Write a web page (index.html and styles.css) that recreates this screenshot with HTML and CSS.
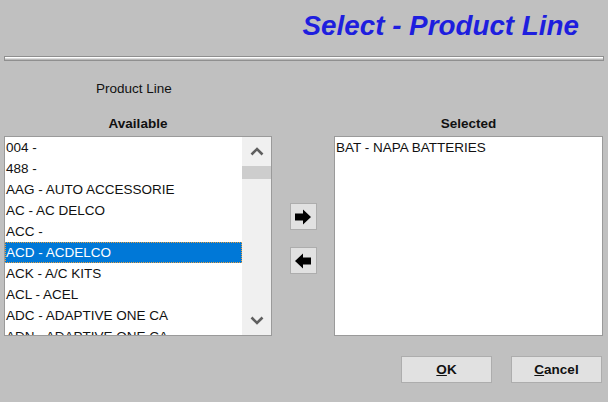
FILE: index.html
```html
<!DOCTYPE html>
<html>
<head>
<meta charset="utf-8">
<link rel="stylesheet" href="styles.css">
</head>
<body>
<div class="dialog">
  <div class="header">
    <h1 class="title">Select - Product Line</h1>
  </div>
  <div class="separator"></div>
  <div class="field-label">Product Line</div>
  <div class="picker">
    <div class="col-label">Available</div>
    <div></div>
    <div class="col-label">Selected</div>

    <div class="listbox">
      <ul class="items">
        <li>004 -</li>
        <li>488 -</li>
        <li>AAG - AUTO ACCESSORIE</li>
        <li>AC - AC DELCO</li>
        <li>ACC -</li>
        <li class="selected">ACD - ACDELCO</li>
        <li>ACK - A/C KITS</li>
        <li>ACL - ACEL</li>
        <li>ADC - ADAPTIVE ONE CA</li>
        <li>ADN - ADAPTIVE ONE CA</li>
      </ul>
      <div class="scrollbar">
        <div class="sb-btn">
          <svg width="14" height="9" viewBox="0 0 14 9"><path d="M1.5 7.5 L7 2 L12.5 7.5" fill="none" stroke="#5f5f5f" stroke-width="2.6"/></svg>
        </div>
        <div class="sb-thumb"></div>
        <div class="sb-track"></div>
        <div class="sb-btn">
          <svg width="14" height="9" viewBox="0 0 14 9"><path d="M1.5 1.5 L7 7 L12.5 1.5" fill="none" stroke="#5f5f5f" stroke-width="2.6"/></svg>
        </div>
      </div>
    </div>

    <div class="movers">
      <button class="mover" type="button" aria-label="Add">
        <svg width="18" height="16" viewBox="0 0 18 16"><path d="M1 4.5 H9 V0.5 L17 8 L9 15.5 V11.5 H1 Z" fill="#000"/></svg>
      </button>
      <button class="mover" type="button" aria-label="Remove">
        <svg width="18" height="16" viewBox="0 0 18 16"><path d="M17 4.5 H9 V0.5 L1 8 L9 15.5 V11.5 H17 Z" fill="#000"/></svg>
      </button>
    </div>

    <div class="listbox">
      <ul class="items">
        <li>BAT - NAPA BATTERIES</li>
      </ul>
    </div>
  </div>
  <div class="footer">
    <button class="btn" type="button"><u>O</u>K</button>
    <button class="btn" type="button"><u>C</u>ancel</button>
  </div>
</div>
</body>
</html>
```
FILE: styles.css
```css
html, body {
  margin: 0;
  padding: 0;
  background: #c0c0c0;
}
body {
  font-family: "Liberation Sans", Arial, sans-serif;
  color: #111;
  width: 608px;
  height: 402px;
  overflow: hidden;
}
.dialog {
  display: flex;
  flex-direction: column;
}
.header {
  height: 56px;
  display: flex;
  justify-content: flex-end;
  padding-right: 29px;
}
.title {
  margin: 0;
  padding-top: 11px;
  font-size: 27.8px;
  line-height: 30px;
  font-weight: bold;
  font-style: italic;
  color: #1e1ede;
}
.separator {
  margin: 0 4px;
  height: 3px;
  border: 1px solid #8f8f8f;
  background: linear-gradient(#ffffff 0 1px, #dcdcdc 1px 2px, #b8b8b8 2px);
}
.field-label {
  margin-top: 19px;
  padding-left: 96px;
  font-size: 13.5px;
  line-height: 18px;
}
.picker {
  margin-top: 18px;
  padding-left: 4px;
  display: grid;
  grid-template-columns: 268px 62px 269px;
  grid-template-rows: 20px 200px;
}
.col-label {
  font-weight: bold;
  font-size: 13.5px;
  line-height: 16px;
  text-align: center;
}
.listbox {
  background: #fff;
  border: 1px solid #9a9a9a;
  display: flex;
  overflow: hidden;
}
.items {
  list-style: none;
  margin: 0;
  padding: 0;
  flex: 1;
  font-size: 13.5px;
}
.items li {
  height: 21px;
  line-height: 21px;
  padding-left: 1px;
  white-space: nowrap;
  overflow: hidden;
  color: #111;
}
.items li.selected {
  background: #0078d7;
  color: #fff;
  outline: 1px dotted #e7a040;
  outline-offset: -1px;
}
.scrollbar {
  width: 29px;
  background: #f0f0f0;
  display: flex;
  flex-direction: column;
}
.sb-btn {
  height: 29px;
  display: flex;
  align-items: center;
  justify-content: center;
}
.sb-thumb {
  height: 13px;
  background: #cdcdcd;
}
.sb-track {
  flex: 1;
}
.movers {
  display: flex;
  flex-direction: column;
  align-items: center;
  padding-top: 67px;
  gap: 17px;
}
.mover {
  width: 27px;
  height: 27px;
  padding: 0;
  margin: 0;
  background: #e1e1e1;
  border: 1px solid #adadad;
  display: flex;
  align-items: center;
  justify-content: center;
}
.footer {
  display: flex;
  justify-content: flex-end;
  gap: 19px;
  padding-right: 6px;
  margin-top: 20px;
}
.btn {
  width: 91px;
  height: 27px;
  margin: 0;
  padding: 0;
  background: #e1e1e1;
  border: 1px solid #adadad;
  font-family: "Liberation Sans", Arial, sans-serif;
  font-weight: bold;
  font-size: 13.5px;
  color: #111;
}
```
